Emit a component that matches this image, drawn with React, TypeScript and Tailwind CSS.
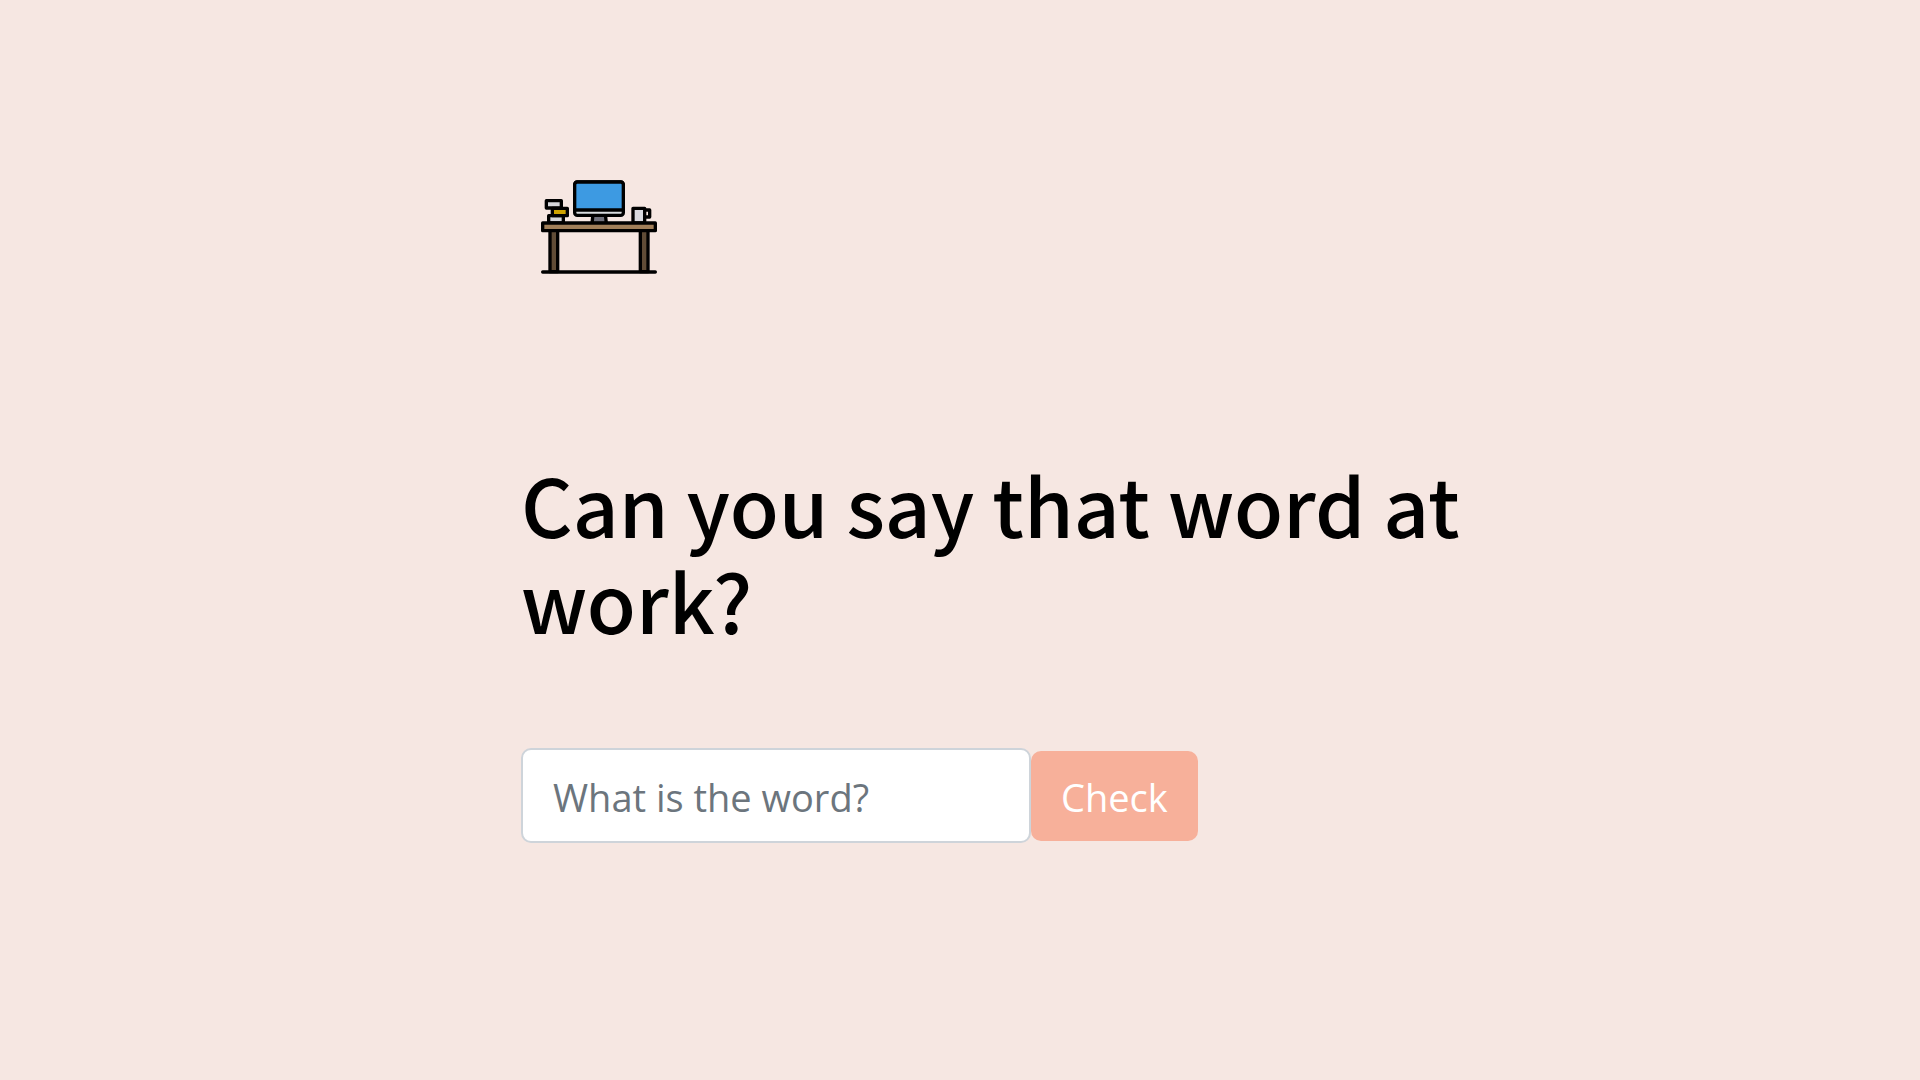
import React from "react";

function DeskIcon() {
  return (
    <svg
      role="img"
      aria-label="Desk with a computer"
      viewBox="0 0 420 345"
      className="ml-[9px] h-[115px] w-[140px]"
      stroke="#000"
      strokeWidth="10"
      strokeLinejoin="round"
      strokeLinecap="round"
    >
      <path d="M189 132h37l3 28h-43z" fill="#71717c" />
      <rect x="134" y="36" width="146" height="100" rx="8" fill="#d9dcdf" />
      <path d="M134 120V44a8 8 0 0 1 8-8h130a8 8 0 0 1 8 8v76z" fill="#3d9ae2" />
      <rect x="56" y="137" width="44" height="22" fill="#d5d6da" />
      <rect x="49" y="92" width="45" height="22" fill="#d5d6da" />
      <rect x="67" y="115" width="45" height="22" fill="#cda200" />
      <path d="M346 120h13v21h-13" fill="none" />
      <rect x="309" y="115" width="35" height="44" fill="#d9d9de" />
      <rect x="60" y="181" width="23" height="124" fill="#604c36" />
      <rect x="331" y="181" width="23" height="124" fill="#604c36" />
      <rect x="38" y="159" width="338" height="23" fill="#a17f59" />
      <path d="M38 306h338" />
    </svg>
  );
}

export default function App() {
  return (
    <main className="grid min-h-screen grid-cols-[521fr_960fr_439fr] bg-[#f6e7e2] text-black">
      <div className="col-start-2 min-w-0 pt-[170px]">
        <DeskIcon />
        <h1 className="mt-[170px] font-['Noto_Sans_CJK_JP',sans-serif] text-[80px] leading-[96px] font-medium">
          Can you say that word at work?
        </h1>
        <form
          className="mt-[101px] flex items-center font-['Open_Sans',sans-serif] text-[38px] leading-[60px]"
          onSubmit={(event) => event.preventDefault()}
        >
          <input
            type="text"
            aria-label="What is the word?"
            placeholder="What is the word?"
            className="h-[95px] w-[510px] min-w-0 rounded-[10px] border-2 border-[#ced4da] bg-white px-[30px] pt-[2px] text-[#495057] outline-none placeholder:text-[#6c757d] placeholder:opacity-100"
          />
          <button
            type="submit"
            className="h-[90px] shrink-0 rounded-[10px] bg-[#f7b09a] px-[30px] pt-[2px] text-white"
          >
            Check
          </button>
        </form>
      </div>
    </main>
  );
}
